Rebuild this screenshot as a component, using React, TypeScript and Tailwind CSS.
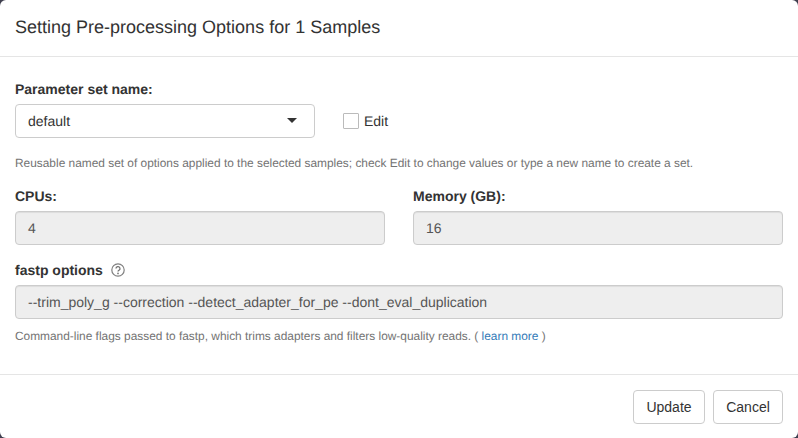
export default function App() {
  const input = "h-[34px] flex items-center px-3 bg-[#eeeeee] border border-[#cccccc] rounded-[4px] text-[14px] text-[#555555] shadow-[inset_0_1px_1px_rgba(0,0,0,0.075)]";
  const label = "block text-[14px] leading-5 font-bold text-[#333333] mb-[5px]";
  const help = "text-[11.9px] leading-[17px] text-[#737373]";
  const btn = "h-[34px] bg-white border border-[#cccccc] rounded-[4px] text-[14px] text-[#333333]";
  return (
    <div className="w-[798px] h-[438px] bg-[#3f3f4f] overflow-hidden [text-rendering:geometricPrecision]" style={{ fontFamily: '"Liberation Sans", Arial, sans-serif' }}>
      <div className="h-full bg-white rounded-[6px] flex flex-col">
        <div className="h-[57px] shrink-0 px-[15px] pb-[2px] flex items-center border-b border-[#e5e5e5]">
          <h4 className="text-[18px] leading-[20px] text-[#333333] font-normal">Setting Pre-processing Options for 1 Samples</h4>
        </div>
        <div className="h-[317px] shrink-0 px-[15px] pt-[22px]">
          <label className={label}>Parameter set name:</label>
          <div className="flex items-center">
            <div className="w-[300px] h-[34px] flex items-center justify-between pl-3 pr-[17px] border border-[#cccccc] rounded-[4px] text-[14px] text-[#333333]">
              <span>default</span>
              <span className="w-0 h-0 mb-[1px] border-x-[5px] border-x-transparent border-t-[5px] border-t-[#333333]" />
            </div>
            <div className="flex items-center ml-[28px]">
              <span className="w-4 h-4 bg-white border border-[#bbbbbb] rounded-[1px]" />
              <span className="ml-[5px] text-[14px] text-[#333333]">Edit</span>
            </div>
          </div>
          <p className={`${help} mt-[17px]`}>Reusable named set of options applied to the selected samples; check Edit to change values or type a new name to create a set.</p>
          <div className="grid grid-cols-2 gap-x-[28px] mt-[14px]">
            <div>
              <label className={label}>CPUs:</label>
              <div className={input}>4</div>
            </div>
            <div>
              <label className={label}>Memory (GB):</label>
              <div className={input}>16</div>
            </div>
          </div>
          <div className="flex items-center h-5 mt-[15px] mb-[5px]">
            <span className="text-[14px] leading-5 font-bold text-[#333333]">fastp options</span>
            <svg className="ml-2" width="14" height="14" viewBox="0 0 14 14" fill="none">
              <circle cx="7" cy="7" r="6.2" stroke="#808080" strokeWidth="1.2" />
              <path d="M5 5.6a2 2 0 1 1 3 1.7c-.7.4-1 .7-1 1.3" stroke="#737373" strokeWidth="1.3" />
              <circle cx="7" cy="10.4" r=".85" fill="#737373" />
            </svg>
          </div>
          <div className={input}>--trim_poly_g --correction --detect_adapter_for_pe --dont_eval_duplication</div>
          <p className={`${help} mt-[9px]`}>
            Command-line flags passed to fastp, which trims adapters and filters low-quality reads. ( <a className="text-[#337ab7]">learn more</a> )
          </p>
        </div>
        <div className="flex-1 border-t border-[#e5e5e5] px-[15px] pt-[15px] flex justify-end gap-2 items-start">
          <button className={`${btn} w-[72px]`}>Update</button>
          <button className={`${btn} w-[70px]`}>Cancel</button>
        </div>
      </div>
    </div>
  );
}
